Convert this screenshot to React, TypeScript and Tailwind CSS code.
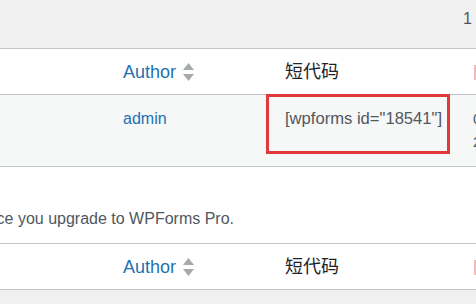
import { ReactNode } from "react";

const FONT = { fontFamily: '"Liberation Sans", "Noto Sans CJK SC", Arial, sans-serif' };

function SortArrows() {
  return (
    <svg width="11" height="19" viewBox="0 0 11 19" className="ml-[7px] shrink-0">
      <path d="M5.5 0 L11 7 L0 7 Z" fill="#a7aaad" />
      <path d="M0 11 L11 11 L5.5 18 Z" fill="#a7aaad" />
    </svg>
  );
}

function HeaderRow() {
  return (
    <div className="flex h-[46px] items-center border-b border-[#c3c4c7] bg-white pt-[1px]">
      <div className="w-[123px] shrink-0" />
      <div className="flex w-[162px] shrink-0 items-center">
        <span className="text-[18px] leading-none text-[#2271b1]">Author</span>
        <SortArrows />
      </div>
      <div className="w-[182px] shrink-0 text-[18px] leading-none text-[#1d2327]">短代码</div>
      <div className="flex flex-1 justify-end">
        <div className="h-[15px] w-[2px] bg-[#f2b8ba]" />
      </div>
    </div>
  );
}

function Cell({ w, children }: { w: string; children: ReactNode }) {
  return <div className={`${w} shrink-0`}>{children}</div>;
}

export default function App() {
  return (
    <div className="relative h-[304px] w-[476px] overflow-hidden bg-[#f0f0f1]" style={FONT}>
      {/* top toolbar band */}
      <div className="flex h-[49px] items-center border-b border-[#c3c4c7] pb-[11px] pl-[463px]">
        <span className="whitespace-nowrap text-[16px] text-[#50575e]">1 项目</span>
      </div>

      <HeaderRow />

      {/* data row */}
      <div className="flex h-[72px] border-b border-[#c3c4c7] bg-[#f6f7f7] pt-[12px]">
        <Cell w="w-[123px]">{null}</Cell>
        <Cell w="w-[162px]">
          <span className="text-[16px] leading-[24px] text-[#2271b1]">admin</span>
        </Cell>
        <Cell w="w-[182px]">
          <span className="whitespace-nowrap text-[16.6px] leading-[24px] text-[#50575e]">
            [wpforms id="18541"]
          </span>
        </Cell>
        <div className="flex flex-col pl-[6px] text-[15px] leading-[23px] text-[#50575e]">
          <span className="whitespace-nowrap">0</span>
          <span className="whitespace-nowrap">2</span>
        </div>
      </div>

      {/* upgrade notice */}
      <div className="h-[77px] border-b border-[#c3c4c7] bg-white pt-[41px]">
        <div className="flex w-[234px] justify-end overflow-hidden">
          <span className="whitespace-nowrap text-[16px] leading-[22px] text-[#50575e]">
            Form entries will be available once you upgrade to WPForms Pro.
          </span>
        </div>
      </div>

      <HeaderRow />

      {/* annotation box */}
      <div className="absolute left-[266px] top-[94px] h-[60px] w-[184px] border-[3px] border-[#e0383c]" />
    </div>
  );
}
